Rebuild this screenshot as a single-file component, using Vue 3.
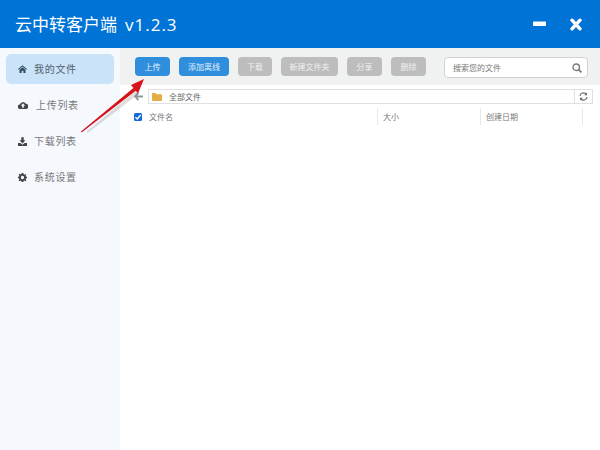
<script setup>
const navItems = [
  { label: '我的文件', icon: 'home', active: true, w: 9, h: 8, box: '0 0 12 10.5', gap: 7, left: 7 },
  { label: '上传列表', icon: 'cloud', w: 10, h: 8, box: '0 0 12 9.6', gap: 8, left: 6 },
  { label: '下载列表', icon: 'download', w: 9, h: 9, box: '0 0 12 12', gap: 7, left: 6 },
  { label: '系统设置', icon: 'gear', w: 9, h: 9, box: '0 0 12 12', gap: 7, left: 6 },
]
const buttons = [
  { label: '上传', w: 35, on: true },
  { label: '添加离线', w: 50, on: true },
  { label: '下载', w: 34 },
  { label: '新建文件夹', w: 57 },
  { label: '分享', w: 35 },
  { label: '删除', w: 35 },
]
</script>

<template>
  <div class="app">
    <header class="top">
      <h1 class="title">云中转客户端<span class="ver">v1.2.3</span></h1>
      <div class="win">
        <svg width="13" height="6" viewBox="0 0 13 6"><rect x="0" y="0.5" width="13" height="4.6" rx="0.8" fill="#fff" /></svg>
        <svg width="12" height="13" viewBox="0 0 12 13"><path d="M2 2.2 L10 10.8 M10 2.2 L2 10.8" stroke="#fff" stroke-width="3.4" stroke-linecap="round" /></svg>
      </div>
    </header>
    <div class="body">
      <aside class="side">
        <div v-for="item in navItems" :key="item.label" class="nav" :class="{ active: item.active }">
          <svg class="ico" :class="item.icon" :width="item.w" :height="item.h" :viewBox="item.box">
            <path v-if="item.icon === 'home'" d="M6 0.2 L12 5.4 L11.2 6.3 L6 1.9 L0.8 6.3 L0 5.4 Z M2 6.4 L6 3 L10 6.4 V10.5 H7.2 V7.6 H4.8 V10.5 H2 Z" />
            <path v-else-if="item.icon === 'cloud'" fill-rule="evenodd" d="M2.8 9.6 A2.7 2.7 0 0 1 2.2 4.2 A3.9 3.9 0 0 1 9.4 3.4 A3.1 3.1 0 0 1 9.2 9.6 Z M6 2.8 L3.4 5.6 H5 V8 H7 V5.6 H8.6 Z" />
            <path v-else-if="item.icon === 'download'" d="M4.4 0.4 H7.6 V4.4 H10 L6 8.6 L2 4.4 H4.4 Z M0 8 H3.2 L6 10.4 L8.8 8 H12 V12 H0 Z" />
            <path v-else fill-rule="evenodd" d="M4.8 0 H7.2 L7.6 1.8 L8.8 2.3 L10.3 1.3 L11.1 2.1 L10.1 3.6 L10.6 4.8 L12 5 V7 L10.6 7.2 L10.1 8.4 L11.1 9.9 L9.9 11.1 L8.4 10.1 L7.6 10.4 L7.2 12 H4.8 L4.4 10.4 L3.4 10.1 L2.1 11.1 L0.9 9.9 L1.9 8.4 L1.4 7.2 L0 7 V5 L1.4 4.8 L1.9 3.6 L0.9 2.1 L2.1 0.9 L3.6 1.9 L4.4 1.6 Z M6 3.8 A2.2 2.2 0 1 0 6 8.2 A2.2 2.2 0 1 0 6 3.8 Z" />
          </svg>
          <span class="lbl" :style="{ marginLeft: item.gap + 'px' }">{{ item.label }}</span>
        </div>
      </aside>
      <main class="main">
        <div class="toolbar">
          <button v-for="b in buttons" :key="b.label" class="btn" :class="{ on: b.on }" :style="{ width: b.w + 'px' }">{{ b.label }}</button>
          <div class="search">
            <span>搜索您的文件</span>
            <svg width="10" height="10" viewBox="0 0 13 13"><circle cx="5.5" cy="5.5" r="4.2" fill="none" stroke="#777" stroke-width="1.8" /><path d="M8.5 8.5 L12.2 12.2" stroke="#777" stroke-width="2.2" /></svg>
          </div>
        </div>
        <div class="pathrow">
          <svg class="back" width="9" height="9" viewBox="0 0 9 9"><path d="M4.4 0.8 L1.2 4.5 L4.4 8.2 M1.5 4.5 H9" fill="none" stroke="#8f979c" stroke-width="1.8" /></svg>
          <div class="path">
            <svg width="10" height="8" viewBox="0 0 10 8"><path d="M0 1 Q0 0 1 0 H3.6 L4.6 1.2 H9 Q10 1.2 10 2.2 V7 Q10 8 9 8 H1 Q0 8 0 7 Z" fill="#e5ad45" /></svg>
            <span>全部文件</span>
            <div class="refresh">
              <svg width="9" height="9" viewBox="0 0 10 10"><path d="M1 4.2 A4 4 0 0 1 8 2.4 M9 5.8 A4 4 0 0 1 2 7.6" fill="none" stroke="#666" stroke-width="1.3" /><path d="M8.8 0.6 V3.6 H5.8 Z M1.2 9.4 V6.4 H4.2 Z" fill="#666" /></svg>
            </div>
          </div>
        </div>
        <div class="head">
          <div class="col c-name">
            <span class="check"><svg width="8" height="8" viewBox="0 0 8 8"><path d="M1.4 4.2 L3.3 6 L6.6 2" fill="none" stroke="#fff" stroke-width="1.4" /></svg></span>
            <span>文件名</span>
          </div>
          <div class="col c-size">大小</div>
          <div class="col c-date">创建日期</div>
        </div>
      </main>
    </div>
    <svg class="arrow" width="72" height="62" viewBox="0 0 72 62">
      <path d="M8 54.5 L57 14 L60 17 L9 56 Z" fill="rgba(70,50,50,.16)" transform="translate(0.6 1)" />
      <path d="M3 55.6 L56 11.4 L58.4 14.2 L3.6 56.6 Z" fill="#d5151b" />
      <path d="M66 3 L53 9 L60 17.6 Z" fill="#d5151b" />
    </svg>
  </div>
</template>

<style>
body { margin: 0; }
</style>

<style scoped>
.app {
  position: relative;
  width: 600px;
  height: 450px;
  overflow: hidden;
  display: flex;
  flex-direction: column;
  font-family: "Noto Sans CJK SC", "Liberation Sans", sans-serif;
  background: #fff;
}
.top {
  height: 48px;
  flex: none;
  background: #0073d7;
  display: flex;
  align-items: center;
  justify-content: space-between;
  padding: 0 18px 0 15px;
  color: #fff;
}
.title {
  margin: 0;
  font-size: 17px;
  font-weight: 400;
  line-height: 48px;
}
.ver {
  margin-left: 8px;
  font-family: "Open Sans", "Liberation Sans", sans-serif;
  letter-spacing: 1px;
}
.win {
  display: flex;
  align-items: center;
  gap: 24px;
}
.body {
  flex: 1;
  display: flex;
  min-height: 0;
}
.side {
  width: 120px;
  flex: none;
  background: #f5f8fd;
  padding-top: 6px;
  box-sizing: border-box;
  display: flex;
  flex-direction: column;
}
.nav {
  height: 30px;
  margin: 0 6px 6px;
  border-radius: 5px;
  display: flex;
  align-items: center;
  padding-left: 12px;
  font-size: 10px;
  letter-spacing: 0.7px;
  color: #777;
}
.lbl { padding-bottom: 2px; }
.nav.active {
  background: #cbe3f8;
  color: #50606c;
}
.ico { fill: #444; flex: none; }
.home { fill: #2e4d63; }
.main {
  flex: 1;
  display: flex;
  flex-direction: column;
  min-width: 0;
}
.toolbar {
  height: 37px;
  flex: none;
  background: #f0f1f1;
  display: flex;
  align-items: flex-start;
  padding: 9px 0 0 15px;
  box-sizing: border-box;
  gap: 9px;
}
.btn {
  height: 19px;
  padding: 0;
  border: 0;
  border-radius: 4px;
  background: #bdbdbd;
  color: #f0f0f0;
  font: inherit;
  font-size: 8px;
  line-height: 19px;
}
.btn.on {
  background: #2f8fdd;
  color: #e4f1fb;
}
.search {
  margin-left: 9px;
  width: 144px;
  height: 21px;
  box-sizing: border-box;
  background: #fff;
  border: 1px solid #d2d2d2;
  border-radius: 4px;
  display: flex;
  align-items: center;
  justify-content: space-between;
  padding: 0 5px 0 8px;
  font-size: 8px;
  color: #777;
}
.pathrow {
  height: 15px;
  margin-top: 4px;
  display: flex;
  align-items: center;
  padding-left: 14px;
  gap: 5px;
  flex: none;
}
.back { flex: none; }
.path {
  width: 445px;
  height: 15px;
  box-sizing: border-box;
  border: 1px solid #e0e0e0;
  display: flex;
  align-items: center;
  padding-left: 3px;
  gap: 7px;
  font-size: 8px;
  color: #666;
}
.refresh {
  margin-left: auto;
  width: 17px;
  height: 13px;
  border-left: 1px solid #e0e0e0;
  display: flex;
  align-items: center;
  justify-content: center;
}
.head {
  display: flex;
  height: 17px;
  margin-top: 4px;
  padding-left: 14px;
  font-size: 8px;
  color: #777;
  flex: none;
}
.col { display: flex; align-items: center; box-sizing: border-box; }
.c-name { width: 243px; gap: 7px; }
.c-size { width: 103px; border-left: 1px solid #e8e8e8; padding-left: 5px; }
.c-date { width: 103px; border-left: 1px solid #e8e8e8; border-right: 1px solid #e8e8e8; padding-left: 5px; }
.check {
  width: 8px;
  height: 8px;
  border-radius: 1.5px;
  background: #1369d6;
  display: flex;
}
.arrow {
  position: absolute;
  left: 78px;
  top: 76px;
}
</style>
